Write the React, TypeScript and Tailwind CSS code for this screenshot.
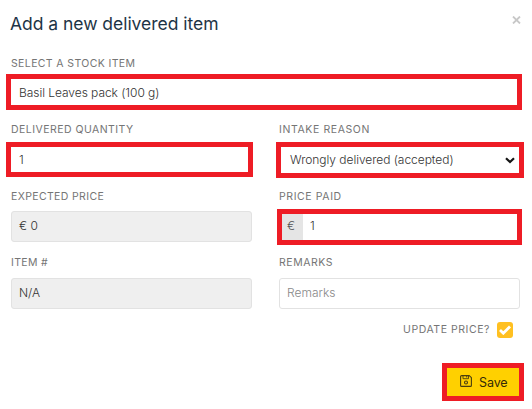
import React from 'react';

type FieldProps = {
  label: string;
  labelClass?: string;
  className?: string;
  children: React.ReactNode;
};

function Field({ label, labelClass = '', className = '', children }: FieldProps) {
  return (
    <div className={`flex flex-col ${className}`}>
      <label className={`h-4 whitespace-nowrap pl-[11px] text-[10.5px] leading-[18px] text-[#757575] ${labelClass}`}>{label}</label>
      {children}
    </div>
  );
}

function SaveIcon() {
  return (
    <svg className="block" width="12" height="12" viewBox="0 0 12 12" fill="none" stroke="#4a3f10" strokeWidth="1.1" strokeLinejoin="round">
      <path d="M1.600.6h7.700l2.100 2v7.800a1 1 0 0 1-1 1H1.600a1 1 0 0 1-1-1V1.600a1 1 0 0 1 1-1Z" />
      <path d="M3 .8v2.900h5.500V.8M6.700.8v1.700" strokeWidth=".9" />
      <circle cx="6" cy="7.500" r="1.500" />
    </svg>
  );
}

export default function App() {
  return (
    <main className="h-[409px] w-[532px] overflow-hidden bg-white font-['Inter',sans-serif] text-[12px] font-light text-[#333]">
      <header className="flex h-[55px] justify-between pl-[10px] pr-[11px]">
        <h1 className="pt-3 text-[17.500px] font-normal leading-6 tracking-[-0.030px] text-[#1d3446]">Add a new delivered item</h1>
        <button className="mt-4 h-2 w-[9px]" aria-label="Close">
          <svg width="9" height="8" viewBox="0 0 9 8" stroke="#c8c8c8" strokeWidth="1.800">
            <path d="m1 .5 7 7M8 .5l-7 7" />
          </svg>
        </button>
      </header>

      <Field label="SELECT A STOCK ITEM" labelClass="font-normal tracking-[0.380px]" className="h-[66px]">
        <div className="ml-[6px] mt-[3px] flex h-9 w-[516px] items-center border-[5px] border-[#ee1c25] pl-2 pt-[2px]">
          <span className="tracking-[-0.050px]">Basil Leaves pack (100 g)</span>
        </div>
      </Field>

      <div className="flex h-[67px]">
        <Field label="DELIVERED QUANTITY" labelClass="font-normal tracking-[0.460px]" className="w-[268px]">
          <div className="ml-[6px] mt-[5px] flex h-[35px] w-[247px] items-center border-[5px] border-[#ee1c25] pl-2">1</div>
        </Field>
        <Field label="INTAKE REASON" labelClass="font-normal tracking-[0.600px]" className="w-[264px]">
          <div className="ml-2 mt-[5px] flex h-9 w-[248px] items-center justify-between border-[5px] border-[#ee1c25] pl-[9px] pr-[4px]">
            <span className="tracking-[-0.040px]">Wrongly delivered (accepted)</span>
            <svg width="10" height="7" viewBox="0 0 10 7" fill="none" stroke="#151515" strokeWidth="2.200">
              <path d="m1 1.200 4 3.800 4-3.800" />
            </svg>
          </div>
        </Field>
      </div>

      <div className="flex h-[66px]">
        <Field label="EXPECTED PRICE" labelClass="font-normal tracking-[0.360px]" className="w-[268px]">
          <div className="ml-[11px] mt-[7px] flex h-[31px] w-[241px] items-center rounded-[3px] border border-[#e2e2e2] bg-[#efefef] pb-px pl-[7px]">€ 0</div>
        </Field>
        <Field label="PRICE PAID" labelClass="font-normal tracking-[0.600px]" className="w-[264px]">
          <div className="ml-[9px] mt-[5px] flex h-9 w-[245px] border-[5px] border-[#ee1c25]">
            <span className="flex w-[21px] items-center justify-center bg-[#e5e5e5] pb-[2px] pr-[3px] text-[#555]">€</span>
            <span className="flex items-center pb-[2px] pl-[7px]">1</span>
          </div>
        </Field>
      </div>

      <div className="flex h-[68px]">
        <Field label="ITEM #" labelClass="font-normal tracking-[0.350px]" className="w-[268px]">
          <div className="ml-[11px] mt-2 flex h-[31px] w-[241px] items-center rounded-[3px] border border-[#e2e2e2] bg-[#efefef] pb-px pl-[7px]">N/A</div>
        </Field>
        <Field label="REMARKS" labelClass="font-normal tracking-[0.550px]" className="w-[264px]">
          <div className="ml-[11px] mt-2 flex h-[31px] w-[241px] items-center rounded-[3px] border border-[#e2e2e2] pb-px pl-[7px] text-[#888]">Remarks</div>
        </Field>
      </div>

      <div className="flex h-4 items-center justify-end gap-[7px] pr-[19px]">
        <span className="text-[10.5px] font-normal leading-4 tracking-[0.550px] text-[#757575]">UPDATE PRICE?</span>
        <span className="flex size-4 items-center justify-center rounded-[3px] bg-[#ffc021]">
          <svg width="12" height="10" viewBox="0 0 12 10" fill="none" stroke="white" strokeWidth="2.800">
            <path d="m1 5 3.300 3.200L11 1.500" />
          </svg>
        </span>
      </div>

      <footer className="flex justify-end pr-2 pt-[25px]">
        <button className="flex h-[38px] w-[82px] items-center border-[5px] border-[#ee1c25] bg-[#ffd000] pl-[13px] text-[#332b08]">
          <span className="pb-[2px]"><SaveIcon /></span>
          <span className="ml-[7px] pt-[2px] text-[12.500px] font-normal tracking-[-0.100px]">Save</span>
        </button>
      </footer>
    </main>
  );
}
